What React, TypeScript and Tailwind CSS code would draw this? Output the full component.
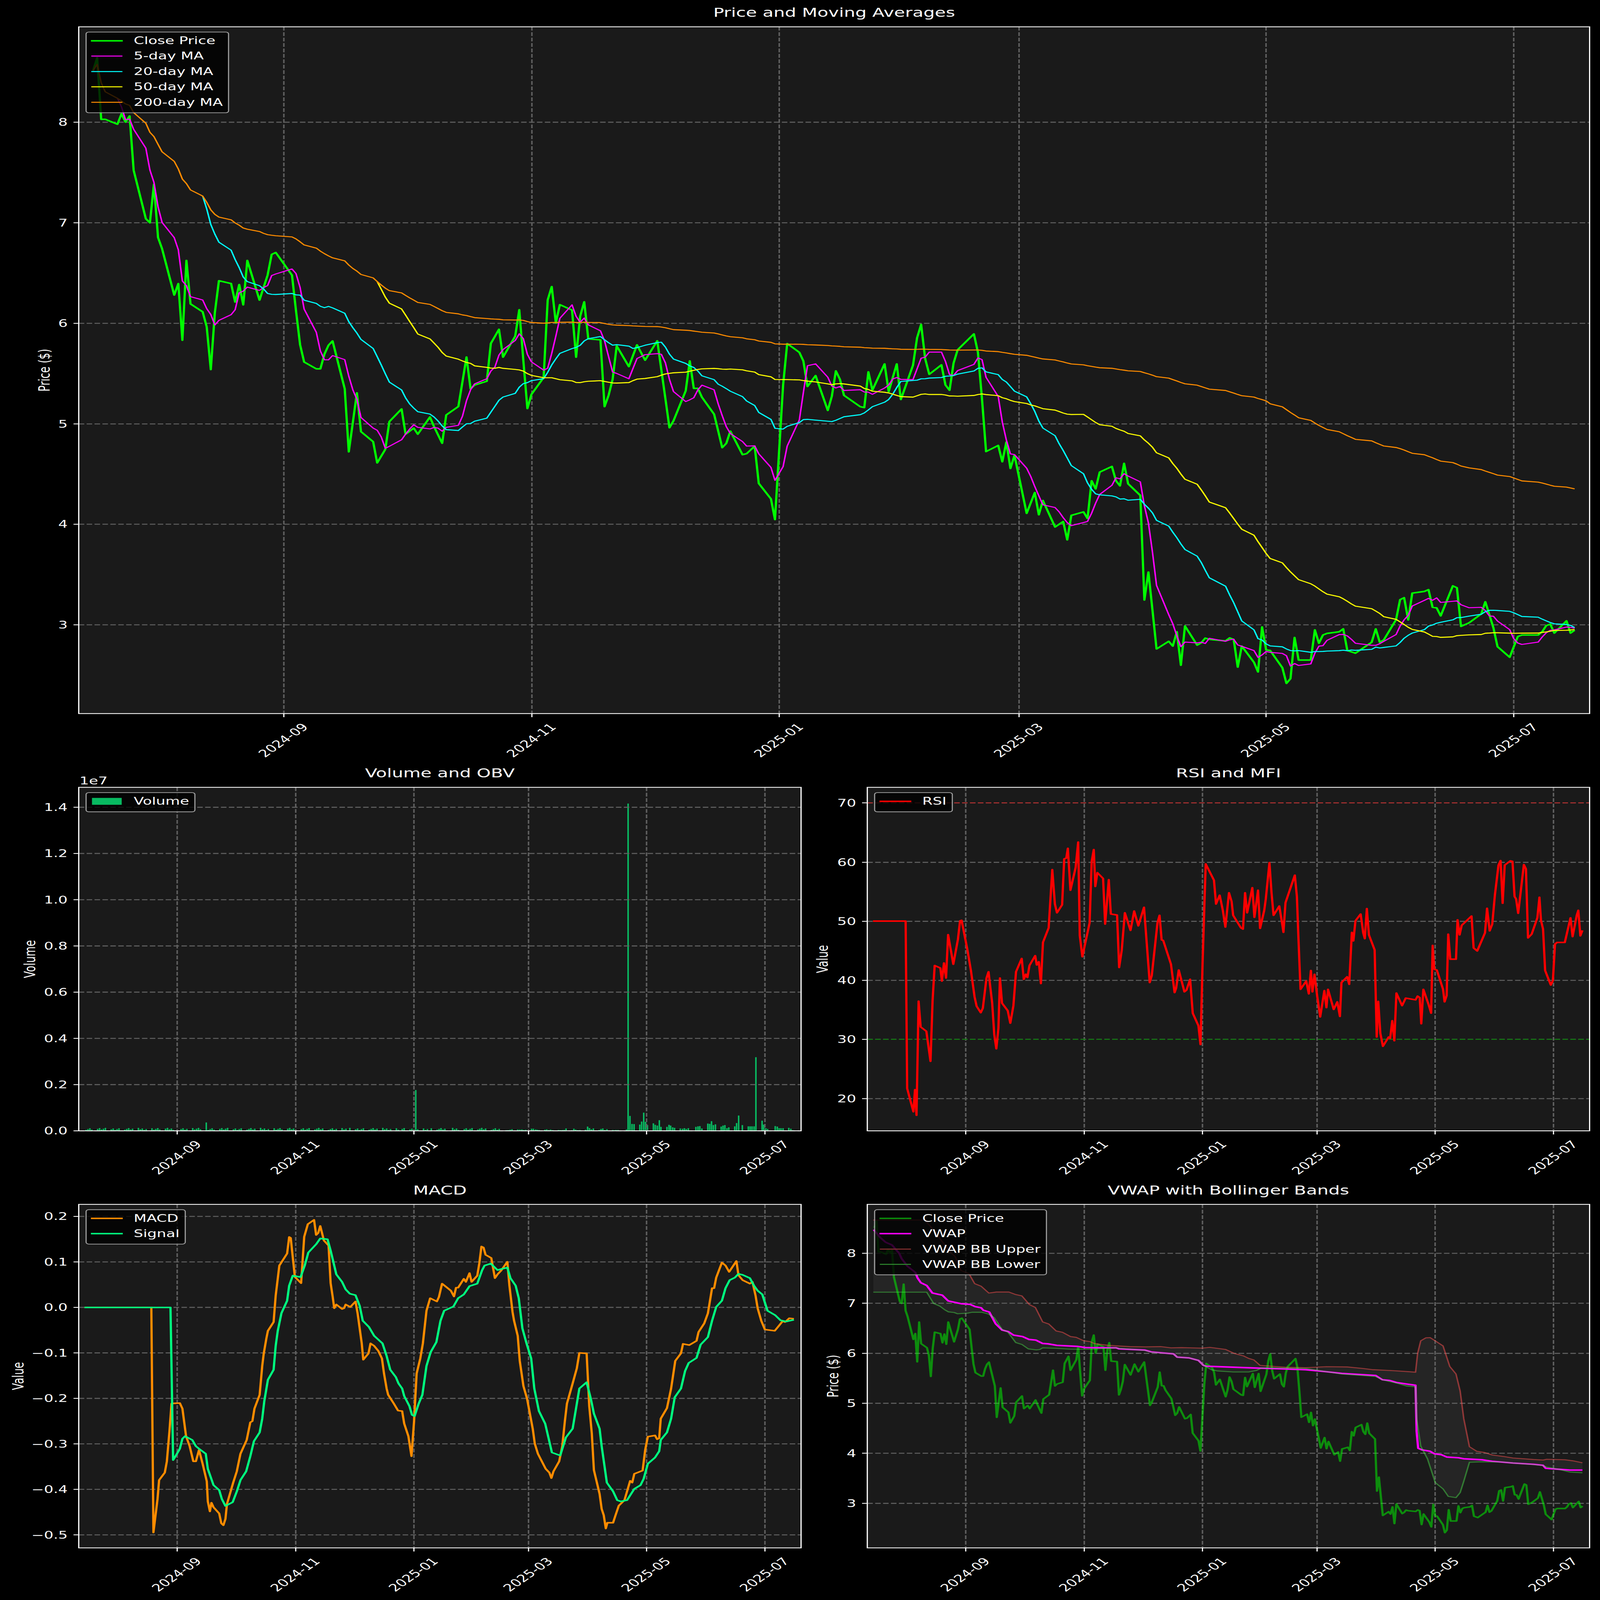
import type { ReactNode } from "react";

type Pt = [number, number];

// reads points off a zoomed crop and puts them back in page pixels
const crop = (pts: Pt[], ox: number, oy: number, fx: number, fy: number): Pt[] =>
  pts.map(([x, y]) => [ox + x / fx, oy + y / fy]);
const poly = (pts: Pt[]) => pts.map(([x, y]) => `${x.toFixed(1)},${y.toFixed(1)}`).join(" ");

const LIME = "#00ff00";
const MAGENTA = "#ff00ff";
const CYAN = "#00ffff";
const YELLOW = "#ffff00";
const ORANGE = "#ff8c00";
const SPRING = "#00ff7f";
const GRID_DASH = "15.4 6.67";

const X_LABELS = ["2024-09", "2024-11", "2025-01", "2025-03", "2025-05", "2025-07"];
const TOP_TICKS = [793, 1486, 2177, 2847, 3537, 4229];
const LEFT_TICKS = TOP_TICKS.map((t) => 495 + (t - 793) * 0.4779);
const RIGHT_TICKS = LEFT_TICKS.map((x) => x + 2203);

// close price, in (top-panel x, price)
const topPrice = (y: number) => 8 - (y - 497) / 408.7;
const fromTop = (pts: Pt[]): Pt[] => pts.map(([x, y]) => [x, topPrice(y)]);
const smallToT = (px: number) => 793 + (px - 2698) / 0.4779;

const closeKnots: Pt[] = [
  ...fromTop([[260, 288], [272, 235]]),
  ...fromTop(crop([[295, 242], [308, 242], [344, 268], [355, 213], [367, 257], [379, 224], [391, 513], [427, 770], [438, 792], [449, 587], [461, 870], [474, 930], [509, 1176], [521, 1115], [533, 1416], [545, 992], [556, 1223], [592, 1265], [604, 1345], [616, 1572], [627, 1270], [639, 1100], [675, 1115], [687, 1213], [698, 1120], [711, 1228], [722, 992], [759, 1203], [781, 1070], [793, 960], [805, 950], [829, 1070], [864, 1260], [876, 1440], [888, 1532], [917, 1568], [930, 1568], [947, 1490], [958, 1443], [971, 1420]], 0, 300, 1.045, 1.3067)),
  ...([[395, 820], [403, 945], [410, 828], [415, 905], [425, 925], [430, 967], [436, 940], [441, 885], [452, 860], [457, 910], [462, 898], [467, 910], [472, 892], [477, 876], [483, 895], [489, 928], [494, 872], [503, 855], [512, 757], [517, 820], [530, 805], [534, 730], [541, 702]] as Pt[]).map(([x, y]): Pt => [smallToT(2200 + x / 0.6907), 8 - (y - 291) / 199.4]),
  ...fromTop(crop([[6, 722], [40, 610], [52, 470], [65, 740], [77, 995], [89, 920], [124, 830], [136, 418], [148, 347], [160, 540], [172, 443], [207, 472], [219, 722], [231, 505], [243, 428], [255, 625], [290, 630], [303, 985], [315, 925], [327, 840], [339, 662], [373, 772], [397, 657], [421, 738], [457, 635], [492, 1097], [504, 1060], [551, 742], [562, 888], [574, 888], [587, 935], [622, 1025], [647, 1203], [659, 1180], [670, 1115], [706, 1240], [716, 1235], [741, 1195], [753, 1393], [789, 1475], [800, 1585], [812, 1280], [824, 870], [836, 650], [883, 743], [895, 878], [919, 820], [955, 1005], [966, 930], [978, 795], [990, 840], [1002, 925], [1050, 985], [1060, 990], [1073, 800], [1085, 897], [1120, 758], [1132, 905], [1156, 758], [1168, 947], [1203, 765], [1215, 620], [1226, 548], [1238, 730], [1250, 813], [1286, 763], [1298, 870], [1310, 898], [1322, 753], [1346, 683]], 1400, 900, 1.045, 1.3067)),
  ...fromTop(crop([[18, 70], [29, 160], [38, 390], [49, 647], [79, 617], [89, 697], [100, 600], [109, 730], [118, 665], [130, 790], [149, 950], [170, 848], [180, 957], [189, 887], [209, 985], [219, 1017], [240, 990], [249, 1080], [259, 960], [290, 943], [300, 975], [310, 790], [319, 830], [330, 748], [359, 720], [369, 790], [380, 815], [390, 705], [400, 805], [430, 862], [440, 1375], [450, 1238]], 2700, 1300, 0.886, 1.206)),
  ...([[472, 680], [502, 640], [511, 665], [520, 590], [531, 765], [540, 560], [571, 660], [581, 648], [591, 623], [600, 630], [640, 638], [649, 622], [658, 630], [668, 775], [678, 665], [706, 750], [717, 800], [727, 565], [737, 685], [746, 688], [775, 778], [785, 860], [795, 835], [804, 620], [814, 738], [846, 738], [854, 580], [864, 650], [875, 607], [914, 590], [922, 575], [932, 688], [951, 702], [991, 645], [1001, 575], [1010, 645], [1020, 632], [1058, 422], [1068, 412], [1078, 528], [1087, 388], [1125, 370], [1136, 462], [1145, 465], [1156, 507], [1187, 350], [1196, 360], [1206, 562], [1224, 543], [1254, 497], [1264, 433], [1285, 570], [1294, 668], [1323, 723], [1342, 615], [1352, 607], [1393, 607], [1403, 590], [1412, 558], [1420, 550], [1431, 597], [1460, 533], [1469, 597], [1483, 582]] as Pt[]).map(([x, y]): Pt => [smallToT(3600 + x / 1.802), 3 - (y - 553) / 525.4]),
];

const HOLIDAYS = new Set(["2024-09-02", "2024-11-28", "2024-12-25", "2025-01-01", "2025-01-09", "2025-01-20", "2025-02-17", "2025-04-18", "2025-05-26", "2025-06-19", "2025-07-04"]);
const tradingDays: number[] = [];
for (let d = -47; d <= 318; d++) {
  const date = new Date(Date.UTC(2024, 8, 1 + d));
  const wd = date.getUTCDay();
  if (wd !== 0 && wd !== 6 && !HOLIDAYS.has(date.toISOString().slice(0, 10))) tradingDays.push(793 + d * 11.34);
}

const nearestDay = (t: number) => {
  let best = 0;
  tradingDays.forEach((day, i) => {
    if (Math.abs(day - t) < Math.abs(tradingDays[best] - t)) best = i;
  });
  return best;
};

// snap the knots to real trading days (closest knot wins), fill the days between
const closeVals: number[] = tradingDays.map(() => NaN);
const snapDist: number[] = tradingDays.map(() => Infinity);
closeKnots.forEach(([t, v]) => {
  const i = nearestDay(t);
  const dist = Math.abs(tradingDays[i] - t);
  if (dist < snapDist[i]) {
    closeVals[i] = v;
    snapDist[i] = dist;
  }
});
for (let i = 0; i < closeVals.length; i++) {
  if (!Number.isNaN(closeVals[i])) continue;
  let a = i - 1;
  let b = i + 1;
  while (b < closeVals.length && Number.isNaN(closeVals[b])) b++;
  if (b >= closeVals.length) {
    closeVals[i] = closeVals[a];
    continue;
  }
  closeVals[i] = closeVals[a] + ((closeVals[b] - closeVals[a]) * (i - a)) / (b - a);
}

const rolling = (n: number, minPeriods: number): Pt[] => {
  const out: Pt[] = [];
  closeVals.forEach((_, i) => {
    if (i + 1 < minPeriods) return;
    const part = closeVals.slice(Math.max(0, i - n + 1), i + 1);
    out.push([tradingDays[i], part.reduce((s, v) => s + v, 0) / part.length]);
  });
  return out;
};

const closeSeries: Pt[] = closeVals.map((v, i) => [tradingDays[i], v]);
const topY = (v: number) => 497 + (8 - v) * 408.7;
const onTop = (pts: Pt[]): Pt[] => pts.map(([t, v]) => [t, topY(v)]);
const onVwap = (pts: Pt[]): Pt[] => pts.map(([t, v]) => [2698 + (t - 793) * 0.4779, 5097 + (8 - v) * 203.4]);

const rsi = crop([[165, 633], [228, 633], [231, 1300], [243, 1393], [246, 1305], [249, 1407], [253, 952], [257, 1055], [268, 1072], [276, 1192], [280, 950], [284, 810], [295, 820], [298, 872], [302, 800], [306, 860], [310, 687], [320, 805], [329, 705], [333, 632], [336, 630], [347, 745], [354, 830], [361, 935], [365, 972], [373, 998], [377, 980], [384, 860], [388, 835], [395, 960], [399, 1085], [403, 1142], [407, 1060], [410, 860], [414, 960], [425, 990], [430, 1040], [436, 970], [441, 835], [452, 782], [456, 865], [460, 845], [463, 858], [467, 810], [478, 771], [481, 808], [485, 795], [489, 882], [493, 718], [504, 660], [511, 428], [516, 565], [520, 600], [530, 568], [534, 385], [538, 382], [541, 343], [546, 510], [556, 420], [561, 318], [564, 690], [569, 775], [583, 640], [587, 395], [591, 348], [594, 495], [598, 440], [609, 463], [613, 645], [620, 468], [624, 605], [636, 609], [640, 818], [645, 750], [651, 600], [662, 670], [669, 593], [677, 652], [688, 578], [699, 878], [703, 850], [714, 640], [718, 610], [722, 708], [725, 710], [740, 805], [747, 918], [750, 900], [755, 828], [766, 915], [770, 908], [777, 865], [782, 1000], [793, 1050], [797, 1125], [801, 800], [807, 405], [823, 470], [827, 565], [834, 530], [840, 590], [845, 657], [852, 520], [857, 555], [860, 610], [875, 660], [879, 665], [883, 520], [887, 600], [897, 500], [901, 618], [908, 510], [912, 662], [920, 590], [923, 545], [930, 400], [934, 520], [938, 610], [949, 573], [955, 650], [957, 678], [961, 560], [979, 450], [983, 535], [986, 700], [990, 905], [1001, 872], [1006, 923], [1010, 830], [1013, 915], [1017, 845], [1022, 930], [1028, 1015], [1036, 910], [1040, 978], [1043, 905], [1054, 985], [1061, 955], [1066, 1013], [1069, 878], [1080, 855], [1084, 885], [1089, 678], [1092, 712], [1096, 632], [1106, 605], [1111, 680], [1114, 703], [1118, 583], [1122, 688], [1133, 748], [1137, 1095], [1140, 953], [1144, 1080], [1149, 1132], [1160, 1095], [1163, 1100], [1167, 1030], [1171, 1110], [1175, 920], [1186, 970], [1193, 940], [1212, 947], [1216, 932], [1220, 938], [1223, 1042], [1227, 905], [1237, 965], [1242, 1000], [1245, 730], [1248, 825], [1253, 828], [1265, 905], [1268, 955], [1272, 930], [1275, 685], [1279, 785], [1290, 785], [1293, 628], [1297, 688], [1301, 650], [1320, 613], [1324, 740], [1331, 752], [1346, 680], [1350, 582], [1355, 672], [1360, 645], [1365, 530], [1372, 410], [1376, 392], [1380, 562], [1384, 410], [1395, 393], [1399, 395], [1403, 535], [1406, 545], [1410, 602], [1421, 408], [1425, 425], [1429, 700], [1436, 685], [1447, 620], [1451, 538], [1454, 630], [1458, 665], [1462, 830], [1473, 888], [1477, 870], [1481, 725], [1485, 718], [1500, 718], [1511, 620], [1515, 695], [1523, 610], [1526, 590], [1530, 692], [1534, 670]], 2200, 3100, 0.6907, 0.98);

const macd = crop([[163, 507], [292, 507], [296, 1404], [304, 1270], [307, 1195], [318, 1165], [322, 1120], [327, 1000], [331, 890], [336, 889], [347, 888], [352, 910], [359, 1020], [366, 1060], [373, 1120], [378, 1120], [384, 1075], [391, 1130], [399, 1200], [401, 1280], [405, 1320], [408, 1285], [412, 1303], [423, 1328], [427, 1367], [431, 1375], [435, 1350], [438, 1290], [450, 1205], [457, 1160], [464, 1090], [476, 1035], [483, 965], [487, 960], [491, 910], [501, 855], [506, 740], [509, 690], [514, 630], [517, 600], [528, 565], [532, 460], [539, 340], [554, 292], [558, 226], [561, 230], [569, 385], [581, 410], [587, 225], [594, 175], [606, 158], [610, 218], [614, 210], [618, 182], [625, 240], [634, 260], [638, 410], [642, 465], [645, 510], [649, 495], [660, 513], [664, 510], [667, 495], [676, 505], [686, 483], [690, 530], [694, 590], [698, 650], [701, 715], [711, 690], [715, 650], [722, 660], [730, 680], [737, 710], [741, 770], [746, 830], [749, 855], [760, 890], [768, 918], [776, 920], [780, 970], [788, 1020], [794, 1100], [799, 960], [804, 770], [811, 710], [816, 650], [823, 520], [830, 470], [843, 483], [847, 465], [853, 412], [870, 440], [876, 463], [880, 428], [884, 428], [895, 393], [899, 405], [906, 370], [910, 405], [921, 380], [925, 330], [929, 264], [933, 268], [937, 297], [948, 310], [955, 390], [960, 375], [967, 360], [979, 325], [983, 420], [989, 525], [992, 560], [999, 620], [1003, 720], [1010, 820], [1017, 870], [1028, 990], [1032, 1050], [1038, 1090], [1053, 1150], [1060, 1165], [1064, 1187], [1068, 1160], [1079, 1120], [1085, 1060], [1090, 960], [1094, 890], [1105, 810], [1113, 750], [1118, 688], [1132, 690], [1137, 900], [1142, 1010], [1146, 1155], [1157, 1250], [1161, 1310], [1165, 1335], [1169, 1388], [1172, 1365], [1183, 1365], [1187, 1340], [1194, 1297], [1205, 1275], [1216, 1198], [1220, 1205], [1224, 1170], [1240, 1157], [1245, 1075], [1250, 1022], [1264, 1017], [1268, 1032], [1272, 1028], [1275, 950], [1287, 908], [1295, 830], [1303, 720], [1314, 690], [1318, 652], [1330, 657], [1344, 640], [1348, 605], [1359, 570], [1366, 530], [1374, 430], [1378, 430], [1382, 388], [1393, 328], [1400, 340], [1407, 365], [1421, 322], [1425, 378], [1433, 398], [1447, 412], [1452, 405], [1458, 460], [1462, 510], [1469, 560], [1476, 595], [1495, 600], [1503, 580], [1510, 562], [1515, 565], [1523, 550], [1532, 552]], 0, 4800, 0.6907, 0.98);

const signal = crop([[163, 507], [329, 507], [334, 1115], [340, 1095], [347, 1070], [352, 1030], [357, 1020], [371, 1035], [378, 1060], [384, 1070], [397, 1090], [401, 1150], [412, 1215], [423, 1235], [428, 1270], [435, 1298], [449, 1283], [457, 1240], [464, 1195], [475, 1160], [483, 1100], [490, 1040], [501, 1005], [506, 950], [510, 880], [517, 795], [528, 755], [532, 660], [536, 600], [543, 530], [554, 480], [558, 420], [565, 380], [580, 386], [588, 340], [595, 288], [610, 255], [618, 232], [632, 235], [638, 280], [649, 375], [660, 405], [667, 435], [675, 452], [686, 458], [694, 500], [700, 560], [712, 585], [722, 620], [730, 635], [738, 650], [746, 700], [753, 755], [764, 785], [769, 810], [776, 830], [780, 860], [790, 900], [795, 935], [800, 940], [808, 890], [815, 855], [823, 740], [831, 685], [842, 645], [850, 560], [857, 520], [875, 503], [884, 470], [895, 455], [906, 422], [921, 412], [930, 360], [935, 340], [947, 332], [960, 358], [967, 354], [979, 348], [985, 390], [995, 420], [1001, 470], [1008, 590], [1016, 650], [1025, 710], [1031, 830], [1040, 920], [1052, 970], [1065, 1085], [1081, 1097], [1092, 1025], [1105, 990], [1118, 830], [1132, 805], [1140, 870], [1146, 930], [1157, 990], [1161, 1060], [1171, 1205], [1183, 1240], [1191, 1275], [1198, 1280], [1210, 1275], [1224, 1230], [1236, 1215], [1242, 1190], [1250, 1130], [1264, 1105], [1272, 1080], [1275, 1035], [1287, 1005], [1295, 950], [1302, 865], [1314, 830], [1322, 760], [1329, 728], [1344, 708], [1352, 655], [1366, 625], [1374, 560], [1382, 505], [1393, 480], [1400, 430], [1408, 398], [1418, 388], [1425, 373], [1433, 377], [1447, 390], [1455, 420], [1462, 440], [1471, 455], [1481, 520], [1496, 538], [1506, 558], [1517, 563], [1532, 556]], 0, 4800, 0.6907, 0.98);

const vwapLine: Pt[] = [
  ...crop([[378, 590], [405, 650], [430, 690], [458, 712], [490, 780], [500, 820], [525, 880], [560, 930], [570, 975], [584, 1012], [610, 1035], [635, 1095], [678, 1112], [704, 1158], [760, 1180], [800, 1185], [822, 1203], [848, 1212], [858, 1232], [884, 1246], [912, 1340], [940, 1390], [968, 1403], [990, 1430], [1030, 1442], [1058, 1465], [1088, 1470], [1118, 1497], [1142, 1500], [1180, 1512], [1270, 1520], [1305, 1530], [1440, 1532]], 2200, 4700, 1.568, 1.96),
  ...crop([[640, 672], [690, 677], [702, 684], [745, 692], [752, 705], [775, 708], [793, 718], [803, 738], [808, 741], [900, 748], [1000, 755], [1040, 763], [1070, 770], [1135, 778], [1148, 795], [1162, 798], [1175, 806], [1195, 812], [1212, 817], [1214, 1000], [1217, 1068], [1225, 1075], [1240, 1080], [1248, 1090], [1262, 1094], [1272, 1103], [1295, 1106], [1305, 1110], [1340, 1114], [1360, 1120], [1400, 1127], [1440, 1132], [1458, 1136], [1463, 1148], [1490, 1152], [1510, 1155], [1534, 1155]], 2200, 4800, 0.6907, 0.98),
];

const bbUpper: Pt[] = [
  ...crop([[376, 513], [600, 513], [625, 560], [680, 690], [720, 780], [735, 805], [760, 915], [795, 940], [820, 1020], [848, 1040], [882, 1095], [915, 1087], [970, 1087], [1000, 1107], [1027, 1118], [1060, 1187], [1086, 1210], [1118, 1325], [1145, 1342], [1177, 1397], [1205, 1408], [1240, 1442], [1265, 1448], [1297, 1475], [1325, 1482], [1345, 1498], [1405, 1512], [1500, 1522]], 2200, 4700, 1.568, 1.96),
  ...crop([[691, 664], [720, 663], [740, 668], [760, 667], [800, 669], [815, 666], [845, 674], [862, 690], [880, 700], [890, 710], [900, 716], [912, 738], [960, 745], [1000, 747], [1040, 743], [1080, 744], [1110, 750], [1130, 755], [1170, 759], [1200, 763], [1212, 765], [1216, 690], [1222, 640], [1232, 628], [1240, 627], [1250, 640], [1265, 660], [1278, 742], [1290, 772], [1298, 840], [1305, 950], [1316, 1062], [1330, 1080], [1345, 1085], [1360, 1095], [1385, 1102], [1400, 1107], [1440, 1113], [1458, 1115], [1465, 1112], [1500, 1114], [1515, 1118], [1534, 1126]], 2200, 4800, 0.6907, 0.98),
];

const bbLower: Pt[] = [
  ...crop([[376, 1088], [610, 1088], [640, 1178], [668, 1200], [690, 1230], [705, 1245], [730, 1250], [745, 1260], [790, 1255], [810, 1248], [850, 1248], [880, 1262], [905, 1290], [940, 1385], [965, 1405], [1000, 1490], [1027, 1505], [1055, 1540], [1090, 1548], [1105, 1545], [1118, 1532], [1170, 1535], [1240, 1543], [1330, 1543], [1440, 1532]], 2200, 4700, 1.568, 1.96),
  ...crop([[640, 670], [690, 678], [702, 685], [745, 692], [752, 705], [775, 708], [793, 718], [803, 738], [818, 755], [830, 760], [860, 764], [890, 764], [905, 758], [915, 748], [960, 748], [1000, 750], [1040, 763], [1070, 772], [1135, 782], [1148, 795], [1162, 802], [1175, 808], [1195, 820], [1212, 823], [1214, 950], [1222, 1060], [1235, 1110], [1250, 1205], [1265, 1230], [1275, 1260], [1290, 1265], [1298, 1245], [1305, 1200], [1316, 1124], [1340, 1122], [1380, 1123], [1400, 1127], [1440, 1133], [1458, 1137], [1465, 1143], [1490, 1153], [1510, 1163], [1534, 1166]], 2200, 4800, 0.6907, 0.98),
];

// volume bars right of x=1414 were read off the crop: [x, height]
const lateBars = crop([[25, 3], [34, 4], [44, 7], [53, 11], [81, 9], [91, 8], [101, 9], [110, 5], [120, 7], [148, 15], [157, 15], [168, 9], [176, 7], [185, 5], [213, 7], [222, 10], [232, 5], [241, 8], [251, 4], [279, 5], [288, 4], [298, 5], [307, 6], [316, 17], [344, 3], [354, 15], [363, 8], [373, 4], [383, 5], [411, 7], [421, 32], [430, 20], [439, 10], [449, 17], [477, 5], [486, 13], [495, 17], [505, 5], [515, 11], [543, 5], [551, 3], [559, 5], [569, 5], [610, 9], [627, 117], [637, 53], [647, 52], [675, 48], [684, 72], [694, 143], [703, 70], [712, 44], [741, 58], [750, 46], [760, 40], [770, 83], [778, 30], [807, 30], [817, 46], [825, 40], [835, 26], [844, 22], [872, 17], [883, 15], [892, 19], [901, 13], [911, 19], [948, 30], [958, 34], [967, 36], [977, 17], [1006, 56], [1015, 54], [1024, 75], [1033, 44], [1043, 50], [1071, 32], [1080, 40], [1089, 44], [1099, 19], [1108, 26], [1137, 34], [1146, 60], [1156, 120], [1174, 44], [1203, 34], [1212, 34], [1221, 34], [1231, 34], [1240, 585], [1270, 79], [1278, 48], [1288, 19], [1297, 13], [1334, 36], [1344, 32], [1353, 19], [1362, 19], [1372, 19], [1400, 22], [1410, 15], [1419, 3]], 1400, 0, 1.742, 1.96);
const volumeAt = (x: number) => nearestDay(793 + (x - 495) / 0.4779);
const augSpike = volumeAt(573);
const janSpike = volumeAt(1158);
const earlyBars: Pt[] = tradingDays
  .map((t, i): Pt => {
    const x = 495 + (t - 793) * 0.4779;
    if (i === augSpike) return [x, 33];
    if (i === janSpike) return [x, 165];
    return [x, 3 + ((i * 37) % 11) * 0.8];
  })
  .filter(([x]) => x < 1412);
const volumeBars: Pt[] = [...earlyBars, ...lateBars, [1400 + 618 / 1.742, 1330]];

const Line = ({ pts, color, width = 4.17, opacity, dash }: { pts: Pt[]; color: string; width?: number; opacity?: number; dash?: string }) => (
  <polyline points={poly(pts)} fill="none" stroke={color} strokeWidth={width} strokeOpacity={opacity} strokeDasharray={dash} strokeLinejoin="round" />
);

type LegendItem = { label: string; keyClass: string };

function Legend({ items, className }: { items: LegendItem[]; className: string }) {
  return (
    <div className={`absolute flex flex-col gap-[20.83px] rounded-[9px] border-[3.33px] border-[#cccccc]/80 bg-black/80 pt-[13px] pb-[20px] pr-[15px] pl-[11.5px] ${className}`}>
      {items.map((item) => (
        <div key={item.label} className="flex h-[41.67px] items-center gap-[31px] leading-[41.67px] whitespace-nowrap">
          <span className="flex w-[89px] shrink-0 justify-center">
            <span className={item.keyClass} />
          </span>
          {item.label}
        </div>
      ))}
    </div>
  );
}

type ChartProps = {
  box: [number, number, number, number];
  x0: number;
  x1: number;
  y0: number;
  y1: number;
  xTicks: number[];
  yTicks: [string, number][];
  yLabel: string;
  yLabelX: number;
  legend: ReactNode;
  under?: ReactNode;
  children: ReactNode;
  svgClass: string;
};

// one matplotlib axes, drawn in page coordinates through the viewBox
function Chart({ box, x0, x1, y0, y1, xTicks, yTicks, yLabel, yLabelX, legend, under, children, svgClass }: ChartProps) {
  const [bx, by, bw, bh] = box;
  return (
    <div className="relative">
      <svg viewBox={`${bx} ${by} ${bw} ${bh}`} width={bw} height={bh} className={`block overflow-visible ${svgClass}`}>
        <rect x={x0} y={y0} width={x1 - x0} height={y1 - y0} fill="#1a1a1a" />
        {under}
        <g stroke="#5f5f5f" strokeWidth={4.17} strokeDasharray={GRID_DASH}>
          {xTicks.map((x) => (
            <line key={x} x1={x} x2={x} y1={y0} y2={y1} />
          ))}
          {yTicks.map(([label, y]) => (
            <line key={label} x1={x0} x2={x1} y1={y} y2={y} />
          ))}
        </g>
        {children}
        <rect x={x0} y={y0} width={x1 - x0} height={y1 - y0} fill="none" stroke="#ffffff" strokeWidth={3.33} />
        <g stroke="#ffffff" strokeWidth={3.33}>
          {xTicks.map((x) => (
            <line key={x} x1={x} x2={x} y1={y1} y2={y1 + 14.6} />
          ))}
          {yTicks.map(([label, y]) => (
            <line key={label} x1={x0 - 14.6} x2={x0} y1={y} y2={y} />
          ))}
        </g>
        <g className="fill-white text-[41.67px]">
          {yTicks.map(([label, y]) => (
            <text key={label} x={x0 - 31} y={y + 15} textAnchor="end">
              {label}
            </text>
          ))}
          {xTicks.map((x, i) => (
            <text key={x} x={x - 2} y={y1 + 108} dy="15" textAnchor="middle" transform={`rotate(-45 ${x - 2} ${y1 + 108})`}>
              {X_LABELS[i]}
            </text>
          ))}
          <text x={yLabelX} y={(y0 + y1) / 2} dy="15" textAnchor="middle" transform={`rotate(-90 ${yLabelX} ${(y0 + y1) / 2})`}>
            {yLabel}
          </text>
        </g>
      </svg>
      {legend}
    </div>
  );
}

const line6 = "block h-[6px] w-[89px]";
const line4 = "block h-[4px] w-[87px]";

export default function App() {
  // the browser may hand us a smaller window than the figure: fit the figure to it
  const sx = window.innerWidth / 4470;
  const sy = window.innerHeight / 6507;
  return (
    <div className="h-screen w-screen overflow-hidden bg-black">
      <div
        className="flex h-[6507px] w-[4470px] origin-top-left flex-col overflow-hidden bg-black font-['DejaVu_Sans',sans-serif] text-[41.67px] text-white"
        style={{ transform: `scale(${sx}, ${sy})` }}
      >
        <section className="h-[3100px]">
          <h2 className="ml-[220px] flex h-[109px] w-[4221px] items-end justify-center pb-[32px] text-[50px] leading-[50px] font-normal">Price and Moving Averages</h2>
          <Chart
            box={[0, 109, 4470, 2991]}
            svgClass="h-[2991px] w-[4470px]"
            x0={220}
            x1={4441}
            y0={109}
            y1={2902}
            xTicks={TOP_TICKS}
            yTicks={[["8", 497], ["7", 906], ["6", 1315], ["5", 1724], ["4", 2132], ["3", 2541]]}
            yLabel="Price ($)"
            yLabelX={124}
            legend={
              <Legend
                className="top-[20px] left-[239px]"
                items={[
                  { label: "Close Price", keyClass: `${line6} bg-[#00ff00]` },
                  { label: "5-day MA", keyClass: `${line4} bg-[#ff00ff]` },
                  { label: "20-day MA", keyClass: `${line4} bg-[#00ffff]` },
                  { label: "50-day MA", keyClass: `${line4} bg-[#ffff00]` },
                  { label: "200-day MA", keyClass: `${line4} bg-[#ff8c00]` },
                ]}
              />
            }
          >
            <Line pts={onTop(closeSeries)} color={LIME} width={6.25} />
            <Line pts={onTop(rolling(5, 5))} color={MAGENTA} />
            <Line pts={onTop(rolling(20, 20))} color={CYAN} />
            <Line pts={onTop(rolling(50, 50))} color={YELLOW} />
            <Line pts={onTop(rolling(200, 1))} color={ORANGE} />
          </Chart>
        </section>

        <section className="grid h-[1696px] grid-cols-[2320px_2150px]">
          <div>
            <h2 className="ml-[220px] flex h-[102px] w-[2018px] items-end justify-center pb-[32px] text-[50px] leading-[50px] font-normal">Volume and OBV</h2>
            <Chart
              box={[0, 3202, 2320, 1594]}
              svgClass="h-[1594px] w-[2320px]"
              x0={220}
              x1={2238}
              y0={3202}
              y1={4599}
              xTicks={LEFT_TICKS}
              yTicks={[["1.4", 3283], ["1.2", 3471], ["1.0", 3659], ["0.8", 3847], ["0.6", 4035], ["0.4", 4223], ["0.2", 4411], ["0.0", 4599]]}
              yLabel="Volume"
              yLabelX={83}
              under={volumeBars.map(([x, h]) => (
                <rect key={x} x={x - 2.1} y={4598 - h} width={4.2} height={h} fill="#08ba61" />
              ))}
              legend={<Legend className="top-[20px] left-[239px]" items={[{ label: "Volume", keyClass: "block h-[28px] w-[83px] bg-[#08ba61]" }]} />}
            >
              <text x={222} y={3190} className="fill-white text-[41.67px]">
                1e7
              </text>
            </Chart>
          </div>
          <div>
            <h2 className="ml-[103px] flex h-[102px] w-[2018px] items-end justify-center pb-[32px] text-[50px] leading-[50px] font-normal">RSI and MFI</h2>
            <Chart
              box={[2320, 3202, 2150, 1594]}
              svgClass="h-[1594px] w-[2150px]"
              x0={2423}
              x1={4441}
              y0={3202}
              y1={4599}
              xTicks={RIGHT_TICKS}
              yTicks={[["70", 3265], ["60", 3507], ["50", 3747], ["40", 3987], ["30", 4227], ["20", 4468]]}
              yLabel="Value"
              yLabelX={2298}
              legend={<Legend className="top-[20px] left-[122px]" items={[{ label: "RSI", keyClass: `${line6} bg-[#ff0000]` }]} />}
            >
              <Line pts={[[2423, 3265], [4441, 3265]]} color="#ff0000" opacity={0.5} dash={GRID_DASH} />
              <Line pts={[[2423, 4227], [4441, 4227]]} color="#0f7a0f" dash={GRID_DASH} />
              <Line pts={rsi} color="#ff0000" width={6.25} />
            </Chart>
          </div>
        </section>

        <section className="grid h-[1711px] grid-cols-[2320px_2150px]">
          <div>
            <h2 className="ml-[220px] flex h-[102px] w-[2018px] items-end justify-center pb-[32px] text-[50px] leading-[50px] font-normal">MACD</h2>
            <Chart
              box={[0, 4898, 2320, 1609]}
              svgClass="h-[1609px] w-[2320px]"
              x0={220}
              x1={2238}
              y0={4898}
              y1={6295}
              xTicks={LEFT_TICKS}
              yTicks={[["0.2", 4947], ["0.1", 5132], ["0.0", 5317], ["\u22120.1", 5502], ["\u22120.2", 5687], ["\u22120.3", 5872], ["\u22120.4", 6057], ["\u22120.5", 6242]]}
              yLabel="Value"
              yLabelX={50}
              legend={
                <Legend
                  className="top-[20px] left-[239px]"
                  items={[
                    { label: "MACD", keyClass: `${line6} bg-[#ff8c00]` },
                    { label: "Signal", keyClass: `${line6} bg-[#00ff7f]` },
                  ]}
                />
              }
            >
              <Line pts={macd} color={ORANGE} width={6.25} />
              <Line pts={signal} color={SPRING} width={6.25} />
            </Chart>
          </div>
          <div>
            <h2 className="ml-[103px] flex h-[102px] w-[2018px] items-end justify-center pb-[32px] text-[50px] leading-[50px] font-normal">VWAP with Bollinger Bands</h2>
            <Chart
              box={[2320, 4898, 2150, 1609]}
              svgClass="h-[1609px] w-[2150px]"
              x0={2423}
              x1={4441}
              y0={4898}
              y1={6295}
              xTicks={RIGHT_TICKS}
              yTicks={[["8", 5097], ["7", 5300], ["6", 5504], ["5", 5707], ["4", 5910], ["3", 6114]]}
              yLabel="Price ($)"
              yLabelX={2327}
              under={<polygon points={poly([...bbUpper, ...[...bbLower].reverse()])} fill="#ffffff" fillOpacity={0.05} />}
              legend={
                <Legend
                  className="top-[20px] left-[122px]"
                  items={[
                    { label: "Close Price", keyClass: `${line6} bg-[#0b8a0b]` },
                    { label: "VWAP", keyClass: `${line6} bg-[#ff00ff]` },
                    { label: "VWAP BB Upper", keyClass: `${line4} bg-[#8a3232]` },
                    { label: "VWAP BB Lower", keyClass: `${line4} bg-[#2f8a2f]` },
                  ]}
                />
              }
            >
              <Line pts={onVwap(closeSeries)} color={LIME} width={6.25} opacity={0.5} />
              <Line pts={vwapLine} color={MAGENTA} width={6.25} />
              <Line pts={bbUpper} color="#ff5050" opacity={0.5} />
              <Line pts={bbLower} color="#50ff50" opacity={0.4} />
            </Chart>
          </div>
        </section>
      </div>
    </div>
  );
}
